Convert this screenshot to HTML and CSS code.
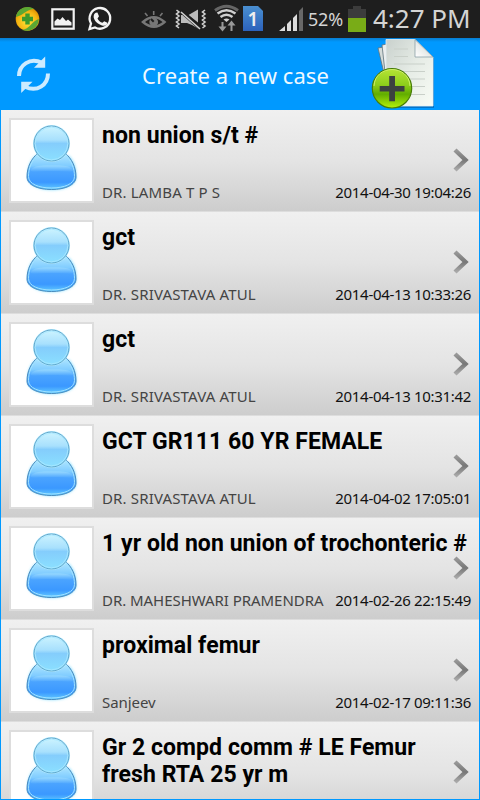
FILE: index.html
```html
<!DOCTYPE html>
<html lang="en">
<head>
<meta charset="utf-8">
<title>Cases</title>
<link rel="stylesheet" href="styles.css">
</head>
<body>
<svg class="defs" width="0" height="0" aria-hidden="true">
  <defs>
    <linearGradient id="head" x1="0" y1="0" x2="0" y2="1"><stop offset="0" stop-color="#cdf4ff"/><stop offset=".4" stop-color="#a8e0fd"/><stop offset=".5" stop-color="#84cdfc"/><stop offset="1" stop-color="#8be0ff"/></linearGradient>
    <linearGradient id="torso" x1="0" y1="0" x2="0" y2="1"><stop offset="0" stop-color="#b4e9ff"/><stop offset=".35" stop-color="#80ccff"/><stop offset=".5" stop-color="#4ba4ff"/><stop offset=".8" stop-color="#3b98ff"/><stop offset="1" stop-color="#62ccff"/></linearGradient>
    <linearGradient id="shine" x1="0" y1="0" x2="0" y2="1"><stop offset="0" stop-color="#a5e0ff"/><stop offset="1" stop-color="#52aaff"/></linearGradient>
    <linearGradient id="arrow" x1="0" y1="0" x2="0" y2="1"><stop offset="0" stop-color="#999"/><stop offset=".5" stop-color="#777"/><stop offset="1" stop-color="#aaa"/></linearGradient>
    <filter id="glow" x="-20%" y="-20%" width="140%" height="150%"><feGaussianBlur stdDeviation="1.6"/></filter>
    <symbol id="person" viewBox="0 0 81 81">
      <path d="M24 36C18 43 17 48 17 57C17 74 65 74 65 57C65 48 64 43 58 36Z" fill="#7edcff" filter="url(#glow)"/>
      <path d="M27 33C20 39 16 47 16 57C16 65 27 69.500 40.500 69.500S65 65 65 57C65 47 61 39 54 33Z" fill="url(#torso)" stroke="#4b8cbd" stroke-width="1"/>
      <path d="M27 35C20.500 41 17.500 48 17.500 56.500C17.500 64 28 68 40.500 68S63.500 64 63.500 56.500C63.500 48 60.500 41 54 35" fill="none" stroke="#a0e2ff" stroke-width="1"/>
      <path d="M20 50C22 45.500 31 45.500 41 45.500S60 45.500 62 50C63 53 55 51 41 51S19 53 20 50Z" fill="url(#shine)" opacity=".6"/>
      <circle cx="40.500" cy="23.500" r="18.500" fill="#b5ecff"/>
      <circle cx="40.500" cy="23.500" r="17.500" fill="url(#head)" stroke="#5a9fc5" stroke-width=".9"/>
      <circle cx="40.500" cy="23.500" r="16.400" fill="none" stroke="#a8e8ff" stroke-width=".9"/>
    </symbol>
    <symbol id="chevron" viewBox="0 0 18 26">
      <path d="M3 3L13.500 13L3 23" fill="none" stroke="url(#arrow)" stroke-width="4.400"/>
    </symbol>
  </defs>
</svg>
<div class="screen">
  <div class="status">
    <svg class="status-icons" width="264" height="38" viewBox="0 0 264 38">
      <defs>
        <radialGradient id="ball" cx=".5" cy=".6" r=".6"><stop offset="0" stop-color="#ffe83a"/><stop offset=".7" stop-color="#f4b310"/><stop offset="1" stop-color="#d98a00"/></radialGradient>
        <linearGradient id="sim" x1="0" y1="0" x2="0" y2="1"><stop offset="0" stop-color="#4a8fd0"/><stop offset="1" stop-color="#2c62bb"/></linearGradient>
      </defs>
      <circle cx="27.500" cy="19" r="11.800" fill="url(#ball)"/>
      <path d="M16 17C17 9 26 4 34 9C27 9 24 15 16 17ZM38.700 19C39 27 31 33 22 30C30 29 31 22 38.700 19Z" fill="#5aa834"/>
      <path d="M25.300 13.500h4.400v3.300h3.300v4.400h-3.300v3.300h-4.400v-3.300h-3.300v-4.400h3.300z" fill="#3d9a2c"/>
      <rect x="52.300" y="9.300" width="21.400" height="19.400" fill="none" stroke="#f2f2f2" stroke-width="2.200"/>
      <path d="M54.500 25.500V21.500L57.500 18.500L60 20L62.500 17L66 21L68 19.500L71.500 22.500V25.500Z" fill="#f2f2f2"/>
      <path d="M89.500 29L91 23.500A10.300 10.300 0 1 1 95 27.400Z" fill="none" stroke="#f4f4f4" stroke-width="2.300"/>
      <path d="M95.700 12.800L97.400 12.600L99 16.300L97.500 18.400C98.500 20.600 100.300 22 102.500 22.800L104.200 21.200L107.400 22.800C107.500 25.500 104.500 26.300 102 25.500C97.500 24 94.500 21 93.700 17.500C93.400 15.500 94.300 13.500 95.700 12.800Z" fill="#f4f4f4"/>
      <g stroke="#777" fill="none" stroke-width="2">
        <path d="M143 22Q154 12.500 164.500 22Q154 31.500 143 22Z" stroke-width="2.500"/>
        <path d="M153.700 11v4M145 13l2.500 3M162.500 13l-2.500 3" stroke-width="1.600"/>
        <circle cx="153.700" cy="22" r="4.400" fill="#777" stroke="none"/><path d="M151 19l2.700 2.700" stroke="#1e1e1e"/>
      </g>
      <g stroke="#d2d2d2" fill="none" stroke-width="1.600">
        <path d="M176.500 10l2.500 2-2.500 2 2.500 2-2.500 2 2.500 2-2.500 2 2.500 2-2.500 2 2.500 2M205 10l-2.500 2 2.500 2-2.500 2 2.500 2-2.500 2 2.500 2-2.500 2 2.500 2-2.500 2"/>
        <path d="M181 15h5L198 27V28.500L192 25L187 23H181ZM188.500 15L198 9.500V22.500Z" fill="#bbb" stroke="none"/>
        <path d="M181 11L200 28" stroke="#1e1e1e" stroke-width="4"/><path d="M181 12L200 29" stroke-width="1.600"/>
      </g>
      <g fill="none" stroke="#cfcfcf" stroke-width="2.500">
        <path d="M215 10.500Q226.500 2 238 10.500" stroke="#666" stroke-width="3"/>
        <path d="M217.500 13.500Q226.500 7 235.500 13.500M220.500 17Q226.500 12.500 232.500 17"/>
        <path d="M223.500 19.500Q226.500 17.500 229.500 19.500L226.500 22Z" fill="#cfcfcf" stroke="none"/>
        <path d="M222.500 22V28M231.500 31V24" stroke="#999" stroke-width="2"/><path d="M218.500 26.500L222.500 31.500L226.500 26.500ZM227.500 25.500L231.500 20.500L235.500 25.500Z" fill="#999" stroke="none"/>
      </g>
      <path d="M243 6H258L263 11V31H243Z" fill="url(#sim)"/>
      <text class="sim-number" x="247.500" y="25.500">1</text>
    </svg>
    <svg class="signal" width="25" height="38" viewBox="0 0 25 38"><path d="M0 31L6 26V31ZM8 24L12 20V31H8ZM14 18L18 14V31H14Z" fill="#ddd"/><path d="M20 11L24 7V31H20Z" fill="#686868"/></svg>
    <span class="percent">52%</span>
    <svg class="battery" width="18" height="38" viewBox="0 0 18 38"><path d="M0 9H5V6H13V9H18V18H0Z" fill="#3c3c3c"/><path d="M0 18H18V32H0Z" fill="#79ac17"/></svg>
    <span class="clock">4:27 PM</span>
  </div>
  <header class="header">
    <svg class="refresh" width="36" height="40" viewBox="0 0 36 40">
      <g fill="none" stroke="#cdebff" stroke-width="4"><path d="M3 20C3 9 14 1 26 6.800"/><path d="M32 17.500C32 29 21 36.500 9 30.700"/></g>
      <path d="M29.200 .5V11.800H18ZM5.200 37V25.800H16.500Z" fill="#cdebff"/>
    </svg>
    <h1 class="header-title">Create a new case</h1>
    <svg class="new-case" width="66" height="72" viewBox="370 38 66 72">
      <defs>
        <linearGradient id="paper" x1="0" y1="0" x2="1" y2="1"><stop offset="0" stop-color="#c9d1cd"/><stop offset=".5" stop-color="#e6ece6"/><stop offset="1" stop-color="#f8fcf5"/></linearGradient>
        <linearGradient id="fold" x1="0" y1="1" x2="1" y2="0"><stop offset="0" stop-color="#fff"/><stop offset=".5" stop-color="#e4e8e6"/><stop offset="1" stop-color="#8b9a9e"/></linearGradient>
        <linearGradient id="green" x1="0" y1="0" x2="0" y2="1"><stop offset="0" stop-color="#b6e436"/><stop offset=".4" stop-color="#8fce1c"/><stop offset=".65" stop-color="#62ad00"/><stop offset="1" stop-color="#b5f20c"/></linearGradient>
      </defs>
      <path d="M378 48L384 47L393 90H388Z" fill="#d5dcda" stroke="#60747c" stroke-width=".8"/>
      <path d="M382 45L387 44V90Z" fill="#eceeee" stroke="#60747c" stroke-width=".8"/>
      <path d="M386 39.500H415L433 57V107H386Z" fill="#07569a" opacity=".55" transform="translate(1 1)"/>
      <path d="M386 39.500H415L433 57V106H386Z" fill="url(#paper)" stroke="#e5f0f5" stroke-width=".8"/>
      <path d="M394 49h14M394 56.500h14M394 64h31M394 71.500h31M394 79h31M394 86.500h31M394 94.500h31" stroke="#c9d0c9"/>
      <path d="M415 39.500L433 57H415Z" fill="url(#fold)" stroke="#7f959d" stroke-width=".7"/>
      <circle cx="392" cy="88.300" r="19.700" fill="url(#green)" stroke="#477d08" stroke-width="1.200"/>
      <path d="M374 86C375 64 409 64 410 86" fill="none" stroke="#d0f06b" stroke-width="1"/>
      <path d="M389.200 76h5.800v10h9.500v5.500h-9.500v9.800h-5.800v-9.800h-9.500v-5.500h9.500z" fill="#3c4140"/>
    </svg>
  </header>
  <main class="list">
    <article class="row"><div class="avatar"><svg><use href="#person"/></svg></div><div class="info"><h2>non union s/t #</h2><div class="meta"><span class="doctor">DR. LAMBA T P S</span><time>2014-04-30 19:04:26</time></div></div><svg class="chevron"><use href="#chevron"/></svg></article>
    <article class="row"><div class="avatar"><svg><use href="#person"/></svg></div><div class="info"><h2>gct</h2><div class="meta"><span class="doctor">DR. SRIVASTAVA ATUL</span><time>2014-04-13 10:33:26</time></div></div><svg class="chevron"><use href="#chevron"/></svg></article>
    <article class="row"><div class="avatar"><svg><use href="#person"/></svg></div><div class="info"><h2>gct</h2><div class="meta"><span class="doctor">DR. SRIVASTAVA ATUL</span><time>2014-04-13 10:31:42</time></div></div><svg class="chevron"><use href="#chevron"/></svg></article>
    <article class="row"><div class="avatar"><svg><use href="#person"/></svg></div><div class="info"><h2>GCT GR111 60 YR FEMALE</h2><div class="meta"><span class="doctor">DR. SRIVASTAVA ATUL</span><time>2014-04-02 17:05:01</time></div></div><svg class="chevron"><use href="#chevron"/></svg></article>
    <article class="row"><div class="avatar"><svg><use href="#person"/></svg></div><div class="info"><h2>1 yr old non union of trochonteric #</h2><div class="meta"><span class="doctor doctor-long">DR. MAHESHWARI PRAMENDRA</span><time>2014-02-26 22:15:49</time></div></div><svg class="chevron"><use href="#chevron"/></svg></article>
    <article class="row"><div class="avatar"><svg><use href="#person"/></svg></div><div class="info"><h2>proximal femur</h2><div class="meta"><span class="doctor doctor-long">Sanjeev</span><time>2014-02-17 09:11:36</time></div></div><svg class="chevron"><use href="#chevron"/></svg></article>
    <article class="row"><div class="avatar"><svg><use href="#person"/></svg></div><div class="info"><h2>Gr 2 compd comm # LE Femur<br>fresh RTA 25 yr m</h2></div><svg class="chevron"><use href="#chevron"/></svg></article>
  </main>
</div>
</body>
</html>
```
FILE: styles.css
```css
* { box-sizing: border-box; }
body { margin: 0; font-family: "Noto Sans", sans-serif; }
.defs { position: absolute; }
.screen { width: 480px; height: 800px; overflow: hidden; display: flex; flex-direction: column; background: #0099ff; }
.status { height: 38px; flex: none; display: flex; align-items: center; background: #1e1e1e; color: #d4d4d4; white-space: nowrap; }
.status svg { flex: none; display: block; }
.sim-number { font: 600 19px "Noto Sans", sans-serif; fill: #eee; }
.signal { margin-left: 15px; }
.percent { width: 39px; margin-left: 4px; margin-right: 1px; font-size: 18px; letter-spacing: -0.2px; line-height: 38px; }
.clock { margin-left: 7px; font-size: 26px; line-height: 36px; padding-bottom: 2px; }
.header { height: 72px; flex: none; display: flex; align-items: center; background: linear-gradient(#087dd0, #0099ff 4px); }
.refresh { margin: 4px 0 0 16px; flex: none; }
.header-title { margin: 1px 0 0 90px; width: 228px; font-size: 22px; font-weight: 400; line-height: 30px; letter-spacing: 0.06px; color: #eef8ff; white-space: nowrap; }
.new-case { flex: none; }
.list { flex: 1; min-height: 0; margin: 0 1px 1px; overflow: hidden; }
.row { height: 102px; display: flex; padding: 8px 9px 0 8px; border-bottom: 1px solid #ddd; background: linear-gradient(#f0f0f0, #e4e4e4 50%, #cdcdcd); position: relative; }
.avatar { width: 85px; height: 85px; flex: none; border: 2px solid #ddd; background: #fff; }
.avatar svg { display: block; width: 81px; height: 81px; }
.info { flex: 1; min-width: 0; height: 84px; margin-left: 8px; display: flex; flex-direction: column; justify-content: space-between; }
.info h2 { margin: 4px 0 0; font: 700 23px/27px Roboto, sans-serif; letter-spacing: 0.06px; color: #000; white-space: nowrap; }
.meta { display: flex; justify-content: space-between; height: 20px; line-height: 20px; font-size: 15px; white-space: nowrap; margin-right: -1px; }
.doctor { color: #444; letter-spacing: 0.15px; }
.doctor-long { letter-spacing: -0.05px; }
.meta time { color: #111; letter-spacing: -0.32px; }
.chevron { position: absolute; right: 9px; top: 37px; width: 18px; height: 26px; }
```
